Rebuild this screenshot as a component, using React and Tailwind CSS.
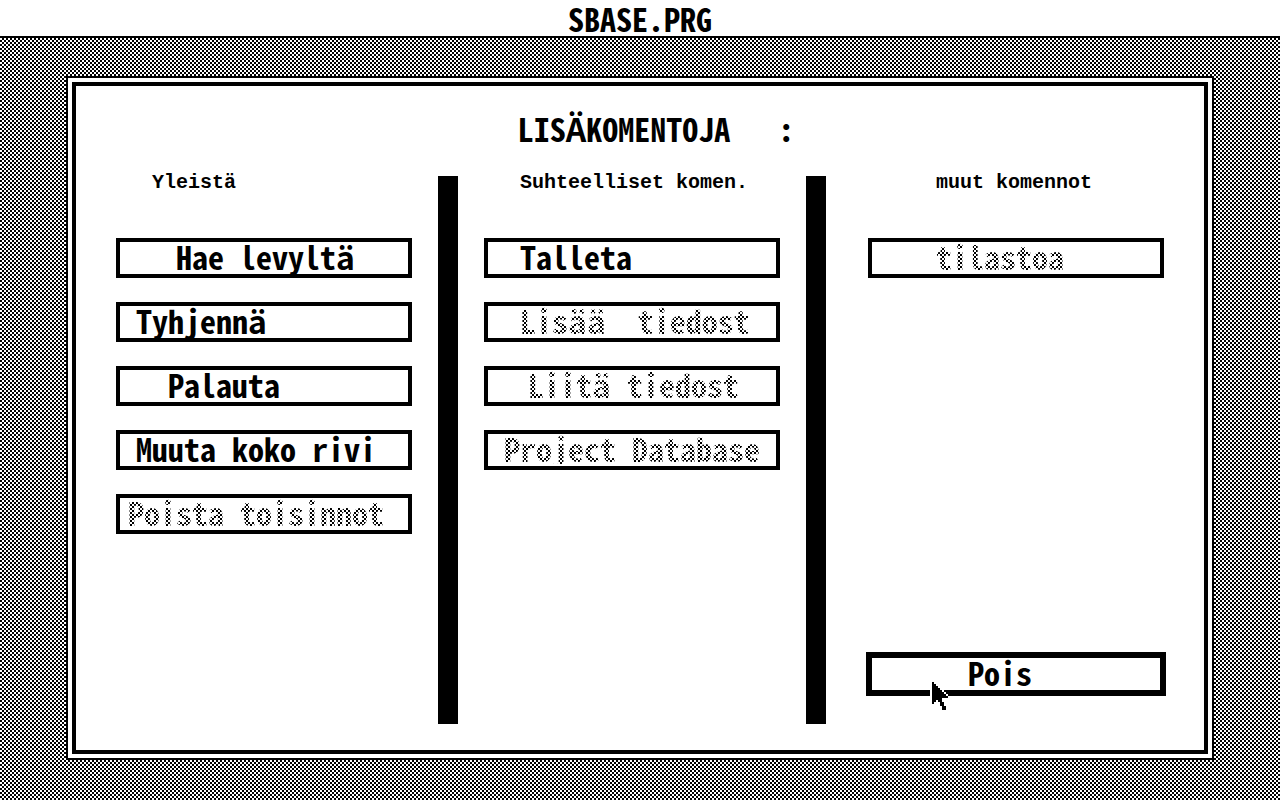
const TYPE = 'font-["Noto_Sans_Mono_CJK_JP",Roboto,monospace] text-[32px] leading-8 font-bold whitespace-pre';
const CHECKER = 'bg-[repeating-conic-gradient(#000_0_25%,#fff_0_50%)] bg-[length:4px_4px]';

function Command({ label, indent, disabled = false, strong = false }) {
  return (
    <button
      type="button"
      disabled={disabled}
      className={`flex w-full items-center border-black bg-white pb-1 text-left text-black ${strong ? 'h-11 border-[6px]' : 'h-10 border-4'} ${indent}`}
    >
      <span
        className={`${TYPE} ${disabled ? `${CHECKER} bg-clip-text text-transparent` : ''}`}
      >
        {label}
      </span>
    </button>
  );
}

function Group({ title, indent, className, children }) {
  return (
    <section className={`flex flex-col ${className}`}>
      <h2
        className={`mb-12 h-3.5 font-["Liberation_Mono",monospace] text-[20px] leading-3.5 font-bold whitespace-pre ${indent}`}
      >
        {title}
      </h2>
      <div className="flex flex-1 flex-col gap-6">{children}</div>
    </section>
  );
}

function Pointer() {
  return (
    <svg
      viewBox="0 0 11 16"
      className="pointer-events-none absolute top-7 left-16 h-8 w-[22px]"
      shapeRendering="crispEdges"
      aria-hidden="true"
    >
      <path
        fill="#fff"
        d="M0 0h2v1h1v1h1v1h1v1h1v1h1v1h1v1h1v1h1v1h1v1h-4v1h1v2h1v2h1v1h-4v-1h-1v-2h-1v-2h-1v1h-1v1h-1v1h-1z"
      />
      <path d="M1 1h1v1h1v1h1v1h1v1h1v1h1v1h1v1h1v1h-3v2h1v2h1v2h-2v-2h-1v-2h-1v-1h-1v1h-1v1h-1z" />
    </svg>
  );
}

export default function App() {
  return (
    <div className="flex min-h-screen flex-col bg-white text-black">
      <header className="flex h-[38px] items-center justify-center border-b-2 border-black bg-white">
        <h1 className={TYPE}>SBASE.PRG</h1>
      </header>

      <main className={`flex flex-1 px-[66px] pt-[38px] pb-10 ${CHECKER}`}>
        <div className="flex flex-1 border-2 border-black bg-white p-1">
          <div
            role="dialog"
            aria-labelledby="dialog-title"
            className="flex flex-1 flex-col border-4 border-black px-10 pt-[26px] pb-[26px]"
          >
            <h2 id="dialog-title" className={`pl-8 text-center ${TYPE}`}>
              {'LISÄKOMENTOJA   :'}
            </h2>

            <div className="mt-8 grid flex-1 grid-cols-[322fr_20px_348fr_20px_338fr]">
              <Group title="Yleistä" indent="pl-9" className="pr-[26px]">
                <Command label="Hae levyltä" indent="pl-14" />
                <Command label="Tyhjennä" indent="pl-4" />
                <Command label="Palauta" indent="pl-12" />
                <Command label="Muuta koko rivi" indent="pl-4" />
                <Command label="Poista toisinnot" indent="pl-2" disabled />
              </Group>

              <div className="bg-black" />

              <Group title="Suhteelliset komen." indent="pl-9" className="px-[26px]">
                <Command label="Talleta" indent="pl-8" />
                <Command label="Lisää  tiedost" indent="pl-8" disabled />
                <Command label="Liitä tiedost" indent="pl-10" disabled />
                <Command label="Project Database" indent="pl-4" disabled />
              </Group>

              <div className="bg-black" />

              <Group title="muut komennot" indent="pl-[68px]" className="pb-7 pl-[42px]">
                <Command label="tilastoa" indent="pl-16" disabled />
                <div className="relative -mx-0.5 mt-auto">
                  <Command label="Pois" indent="pl-24" strong />
                  <Pointer />
                </div>
              </Group>
            </div>
          </div>
        </div>
      </main>
    </div>
  );
}
